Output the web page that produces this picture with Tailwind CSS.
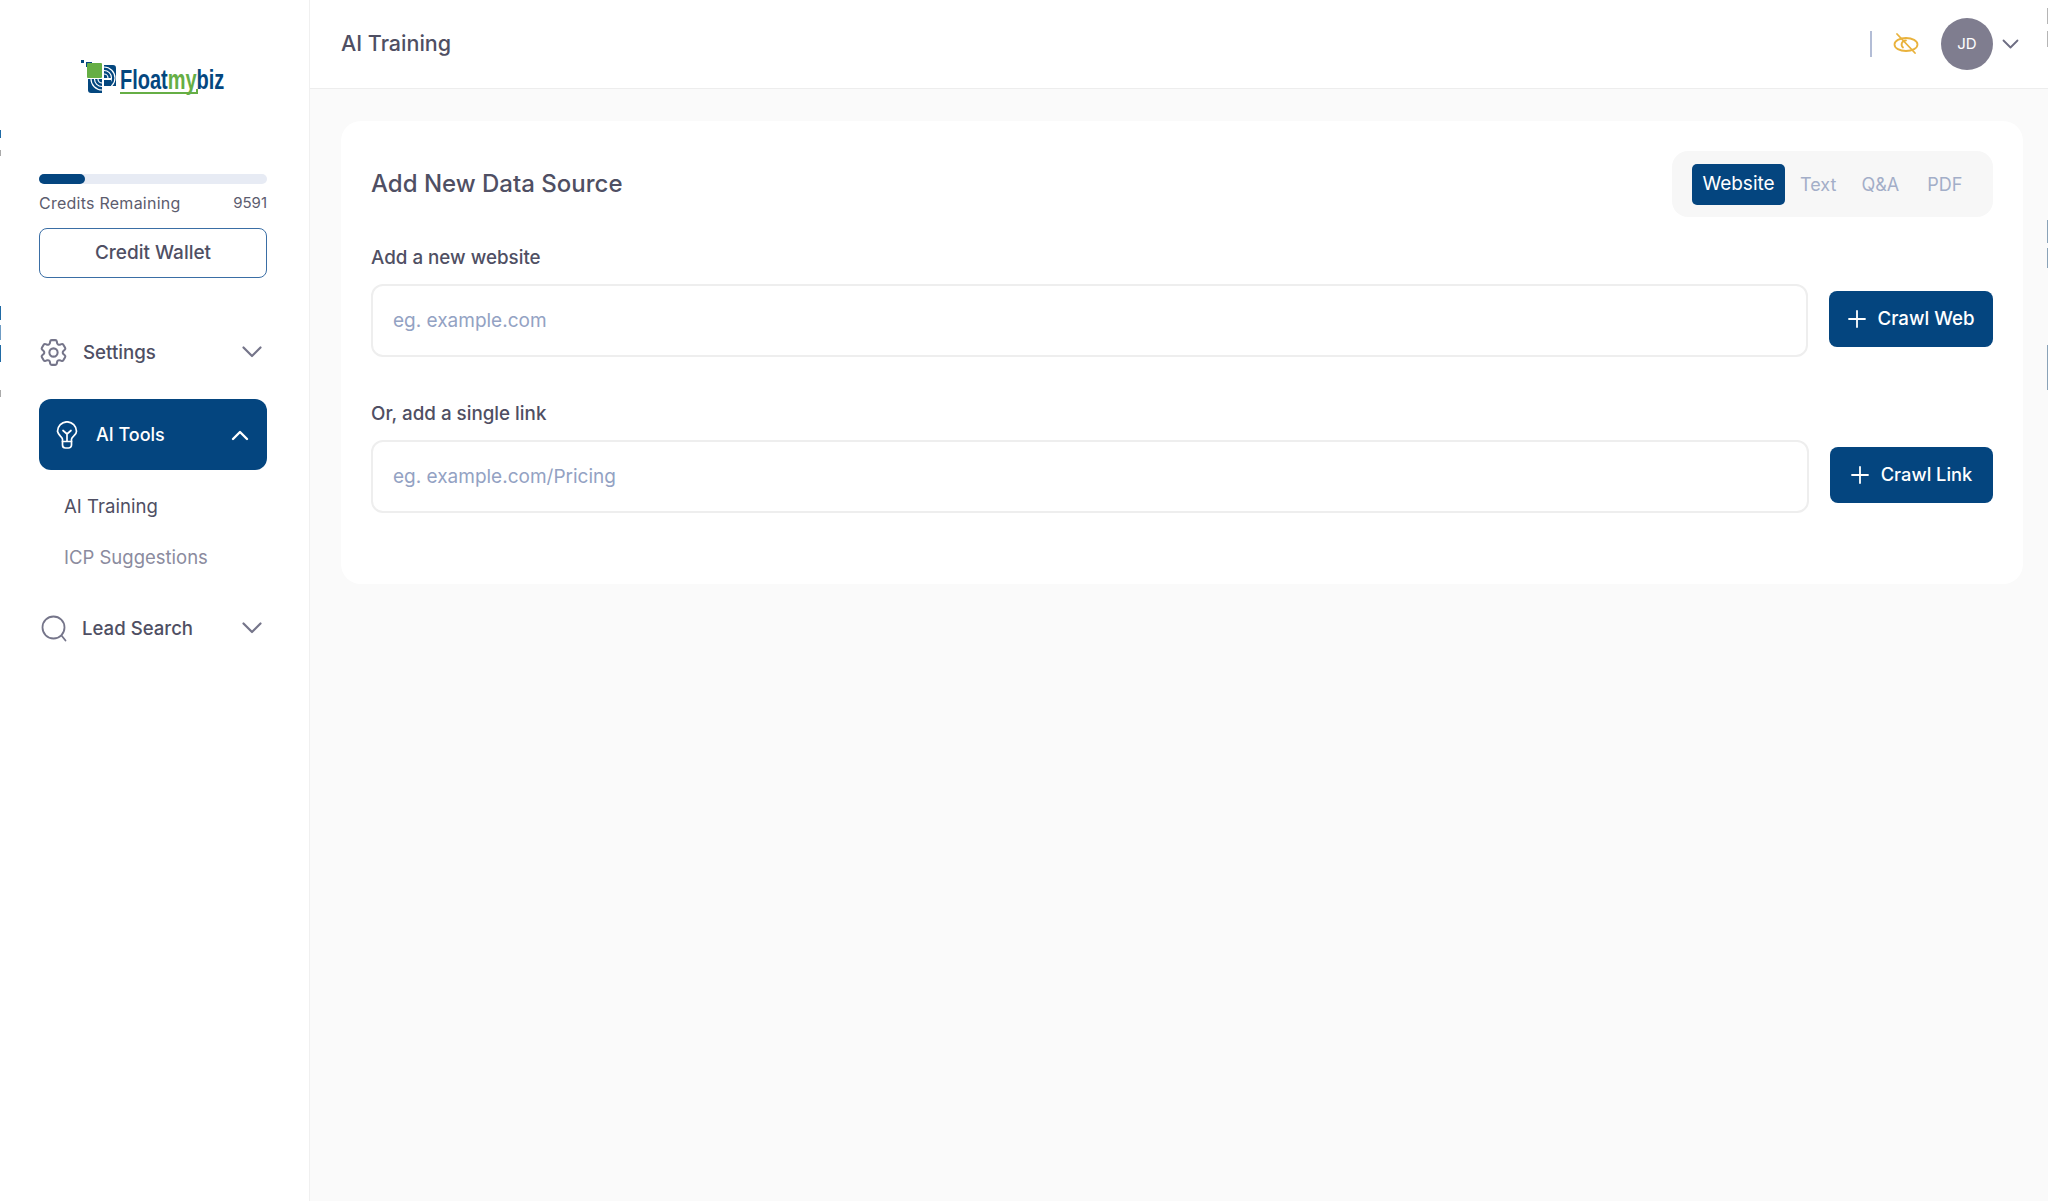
<!DOCTYPE html>
<html lang="en">
<head>
  <meta charset="UTF-8">
  <meta name="viewport" content="width=device-width, initial-scale=1.0">
  <title>AI Training</title>
  <script src="https://cdn.jsdelivr.net/npm/@tailwindcss/browser@4"></script>
</head>
<body class="font-['Inter',sans-serif] text-[#4f4f63] bg-[#fafafa]">
  <div class="relative flex h-[1201px] w-[2048px] overflow-hidden">

    <!-- sidebar -->
    <aside class="flex w-[310px] shrink-0 flex-col border-r border-[#f0f0f0] bg-white pl-[39px] pr-[42px]">
      <div class="mt-[56px] flex h-[40px] justify-center">
        <div class="relative h-[40px] w-[148px]">
          <svg width="148" height="40" viewBox="80 56 148 40">
            <defs>
              <clipPath id="q1"><path d="M105 65h9q3 0 3 3v18h-5v-8h-7z"/></clipPath>
              <clipPath id="q2"><path d="M89 79h14v14H92q-3 0-3-3z"/></clipPath>
            </defs>
            <rect x="82" y="60" width="3" height="3" fill="#04477f"/>
            <rect x="87" y="62" width="6" height="5" fill="#04477f"/>
            <rect x="88" y="63" width="15" height="15" rx="1" fill="#66ae45"/>
            <g clip-path="url(#q1)">
              <rect x="105" y="65" width="12" height="21" fill="#04477f"/>
              <g fill="none" stroke="#fff" stroke-width="1.2">
                <circle cx="105" cy="78" r="4"/><circle cx="105" cy="78" r="7.5"/><circle cx="105" cy="78" r="11"/>
              </g>
            </g>
            <rect x="105" y="80" width="7" height="6" fill="#04477f"/>
            <g clip-path="url(#q2)">
              <rect x="89" y="79" width="14" height="14" fill="#04477f"/>
              <g fill="none" stroke="#fff" stroke-width="1.2">
                <circle cx="103" cy="79" r="4"/><circle cx="103" cy="79" r="7.5"/><circle cx="103" cy="79" r="11"/>
              </g>
            </g>
            <path d="M121 93h77V89" fill="none" stroke="#66ae45" stroke-width="2"/>
          </svg>
          <div class="absolute left-[41px] top-[4px] origin-left scale-x-[0.74] whitespace-nowrap font-['Liberation_Sans',sans-serif] text-[27px] font-bold leading-[40px] text-[#04477f]">Float<span class="text-[#66ae45]">my</span>biz</div>
        </div>
      </div>

      <div class="mt-[78px] h-[10px] rounded-full bg-[#e7ebf4]">
        <div class="h-[10px] w-[46px] rounded-full bg-[#04457f]"></div>
      </div>
      <div class="mt-[9px] mb-[1px] flex h-[20px] items-center justify-between text-[#5c5c6e]">
        <span class="text-[16px] tracking-[0.25px]">Credits Remaining</span>
        <span class="text-[15px]">9591</span>
      </div>
      <button class="mt-[14px] h-[50px] rounded-[8px] border-[1.5px] border-[#3a6ea5] bg-white text-[19px] font-medium text-[#4f4f63]">Credit Wallet</button>

      <nav class="mt-[50px] flex flex-col">
        <div class="flex h-[48px] items-center pr-[5px]">
          <svg class="-ml-[2px] h-[33px] w-[33px]" viewBox="0 0 24 24" fill="none" stroke="#75758a" stroke-width="1.5" stroke-linecap="round" stroke-linejoin="round">
            <path d="M9.594 3.94c.09-.542.56-.94 1.11-.94h2.593c.55 0 1.02.398 1.11.94l.213 1.281c.063.374.313.686.645.87.074.04.147.083.22.127.325.196.72.257 1.075.124l1.217-.456a1.125 1.125 0 0 1 1.37.49l1.296 2.247a1.125 1.125 0 0 1-.26 1.431l-1.003.827c-.293.241-.438.613-.43.992a7.723 7.723 0 0 1 0 .255c-.008.378.137.75.43.991l1.004.827c.424.35.534.955.26 1.43l-1.298 2.247a1.125 1.125 0 0 1-1.369.491l-1.217-.456c-.355-.133-.75-.072-1.076.124a6.47 6.47 0 0 1-.22.128c-.331.183-.581.495-.644.869l-.213 1.281c-.09.543-.56.94-1.11.94h-2.594c-.55 0-1.019-.398-1.11-.94l-.213-1.281c-.062-.374-.312-.686-.644-.87a6.52 6.52 0 0 1-.22-.127c-.325-.196-.72-.257-1.076-.124l-1.217.456a1.125 1.125 0 0 1-1.369-.49l-1.297-2.247a1.125 1.125 0 0 1 .26-1.431l1.004-.827c.292-.24.437-.613.43-.991a6.932 6.932 0 0 1 0-.255c.007-.38-.138-.751-.43-.992l-1.004-.827a1.125 1.125 0 0 1-.26-1.43l1.297-2.247a1.125 1.125 0 0 1 1.37-.491l1.216.456c.356.133.751.072 1.076-.124.072-.044.146-.086.22-.128.332-.183.582-.495.644-.869l.214-1.28Z"/>
            <path d="M15 12a3 3 0 1 1-6 0 3 3 0 0 1 6 0Z"/>
          </svg>
          <span class="ml-[13px] flex-1 pt-[2px] text-[18.7px] font-medium">Settings</span>
          <svg class="h-[12px] w-[20px]" viewBox="0 0 20 12" fill="none" stroke="#75758a" stroke-width="2.2" stroke-linecap="round" stroke-linejoin="round"><path d="M1.5 1.5l8.5 8.5 8.5-8.5"/></svg>
        </div>

        <div class="mt-[23px] flex h-[71px] items-center rounded-[12px] bg-[#04457f] pl-[17px] pr-[18px] text-white">
          <svg class="h-[28px] w-[22px]" viewBox="0 0 22 28" fill="none" stroke="#fff" stroke-width="1.7" stroke-linecap="round" stroke-linejoin="round">
            <path d="M6.5 20.5v-2.3c0-1.3-1-2-2.200-3.200A9.300 9.300 0 0 1 1.500 10.300a9.500 9.500 0 0 1 19 0c0 1.800-1 3.400-2.800 4.700-1.200 1.200-2.200 1.900-2.200 3.200v2.300z"/>
            <path d="M6.5 20.5v3.500a3 3 0 0 0 3 3h3a3 3 0 0 0 3-3v-3.500M11 20v-7M7 9.500l4 3.500 4-3.500"/>
          </svg>
          <span class="ml-[18px] flex-1 text-[18px] font-medium">AI Tools</span>
          <svg class="h-[12px] w-[18px]" viewBox="0 0 18 12" fill="none" stroke="#fff" stroke-width="2.4" stroke-linecap="round" stroke-linejoin="round"><path d="M2 10l7-7 7 7"/></svg>
        </div>

        <div class="mt-[15px] flex h-[40px] items-center pl-[25px] pt-[3px] text-[18.6px]">AI Training</div>
        <div class="mt-[12px] flex h-[40px] items-center pl-[25px] pt-[2px] text-[18.5px] text-[#8b8b9e]">ICP Suggestions</div>

        <div class="mt-[27px] flex h-[48px] items-center pl-[1px] pr-[5px]">
          <svg class="h-[28px] w-[28px]" viewBox="0 0 28 28" fill="none" stroke="#75758a" stroke-width="1.8" stroke-linecap="round"><circle cx="13.5" cy="13.5" r="11"/><path d="M21.5 21.5l4 5"/></svg>
          <span class="ml-[14px] flex-1 pt-[2px] text-[18.6px] font-medium">Lead Search</span>
          <svg class="h-[12px] w-[20px]" viewBox="0 0 20 12" fill="none" stroke="#75758a" stroke-width="2.2" stroke-linecap="round" stroke-linejoin="round"><path d="M1.5 1.5l8.5 8.500 8.500-8.500"/></svg>
        </div>
      </nav>
    </aside>

    <main class="flex min-w-0 flex-1 flex-col">
      <header class="flex h-[89px] shrink-0 items-center border-b border-[#ededed] bg-white pl-[31px] pr-[29px]">
        <h1 class="flex-1 pb-[2px] text-[21.5px] font-medium">AI Training</h1>
        <div class="h-[26px] w-[2px] bg-[#b3bdd6]"></div>
        <svg class="ml-[21px] h-[26px] w-[26px]" viewBox="0 0 26 26" fill="none" stroke="#e9b23c" stroke-width="1.8" stroke-linecap="round">
          <ellipse cx="13" cy="13.5" rx="11.5" ry="6.5"/>
          <path d="M13 9.5a4 4 0 0 0-3 7"/>
          <path d="M4 3l18 19"/>
        </svg>
        <div class="ml-[22px] flex h-[52px] w-[52px] items-center justify-center rounded-full bg-[#7f7d8f] text-[15px] text-white">JD</div>
        <svg class="ml-[9px] h-[12px] w-[17px]" viewBox="0 0 17 12" fill="none" stroke="#6d6d82" stroke-width="1.8" stroke-linecap="round" stroke-linejoin="round"><path d="M1.5 2.5l7 7 7-7"/></svg>
      </header>

      <section class="ml-[31px] mr-[25px] mt-[32px] flex h-[463px] flex-col rounded-[20px] bg-white px-[30px]">
        <div class="mt-[30px] flex h-[66px] items-center justify-between">
          <h2 class="text-[24px] font-medium">Add New Data Source</h2>
          <div class="flex h-[66px] w-[321px] items-center rounded-[16px] bg-[#f7f7f7] pl-[20px] text-[18px] text-[#a3aec8]">
            <span class="flex h-[41px] w-[93px] items-center justify-center rounded-[5px] bg-[#04457f] text-[19px] text-white">Website</span>
            <span class="ml-[15px]">Text</span>
            <span class="ml-[25px]">Q&amp;A</span>
            <span class="ml-[28px]">PDF</span>
          </div>
        </div>

        <label class="mt-[28px] h-[26px] text-[18.8px] font-medium leading-[26px]">Add a new website</label>
        <div class="mt-[13px] flex h-[73px] items-start gap-[21px]">
          <input class="h-[73px] min-w-0 flex-1 rounded-[12px] border-2 border-[#eeeeee] bg-white px-[20px] text-[19px] placeholder:text-[#93a2c3]" placeholder="eg. example.com">
          <button class="mt-[7px] flex h-[56px] w-[164px] shrink-0 items-center justify-center gap-[12px] rounded-[8px] bg-[#04457f] text-[18.7px] font-medium text-white">
            <svg class="h-[18px] w-[18px]" viewBox="0 0 18 18" fill="none" stroke="#fff" stroke-width="1.8" stroke-linecap="round"><path d="M9 1v16M1 9h16"/></svg>
            Crawl Web
          </button>
        </div>

        <label class="mt-[44px] h-[26px] text-[18.8px] font-medium leading-[26px]">Or, add a single link</label>
        <div class="mt-[13px] flex h-[73px] items-start gap-[21px]">
          <input class="h-[73px] min-w-0 flex-1 rounded-[12px] border-2 border-[#eeeeee] bg-white px-[20px] text-[19px] placeholder:text-[#93a2c3]" placeholder="eg. example.com/Pricing">
          <button class="mt-[7px] flex h-[56px] w-[163px] shrink-0 items-center justify-center gap-[12px] rounded-[8px] bg-[#04457f] text-[18.3px] font-medium text-white">
            <svg class="h-[18px] w-[18px]" viewBox="0 0 18 18" fill="none" stroke="#fff" stroke-width="1.8" stroke-linecap="round"><path d="M9 1v16M1 9h16"/></svg>
            Crawl Link
          </button>
        </div>
      </section>
    </main>

    <!-- clipped slivers at the window edges -->
    <div class="absolute left-0 top-[130px] h-[8px] w-[1px] bg-[#1f6aa5]"></div>
    <div class="absolute left-0 top-[150px] h-[6px] w-[1px] bg-[#aaaaaa]"></div>
    <div class="absolute left-0 top-[306px] h-[14px] w-[1px] bg-[#1f6aa5]"></div>
    <div class="absolute left-0 top-[325px] h-[15px] w-[1px] bg-[#6f9cc4]"></div>
    <div class="absolute left-0 top-[345px] h-[17px] w-[1px] bg-[#1f6aa5]"></div>
    <div class="absolute left-0 top-[390px] h-[7px] w-[1px] bg-[#aaaaaa]"></div>
    <div class="absolute right-0 top-[8px] h-[16px] w-[1px] bg-[#b5b5b5]"></div>
    <div class="absolute right-0 top-[31px] h-[16px] w-[1px] bg-[#b5b5b5]"></div>
    <div class="absolute right-0 top-[220px] h-[23px] w-[1px] bg-[#8aa3b8]"></div>
    <div class="absolute right-0 top-[248px] h-[20px] w-[1px] bg-[#8aa3b8]"></div>
    <div class="absolute right-0 top-[345px] h-[45px] w-[1px] bg-[#8aa3b8]"></div>
  </div>
</body>
</html>
